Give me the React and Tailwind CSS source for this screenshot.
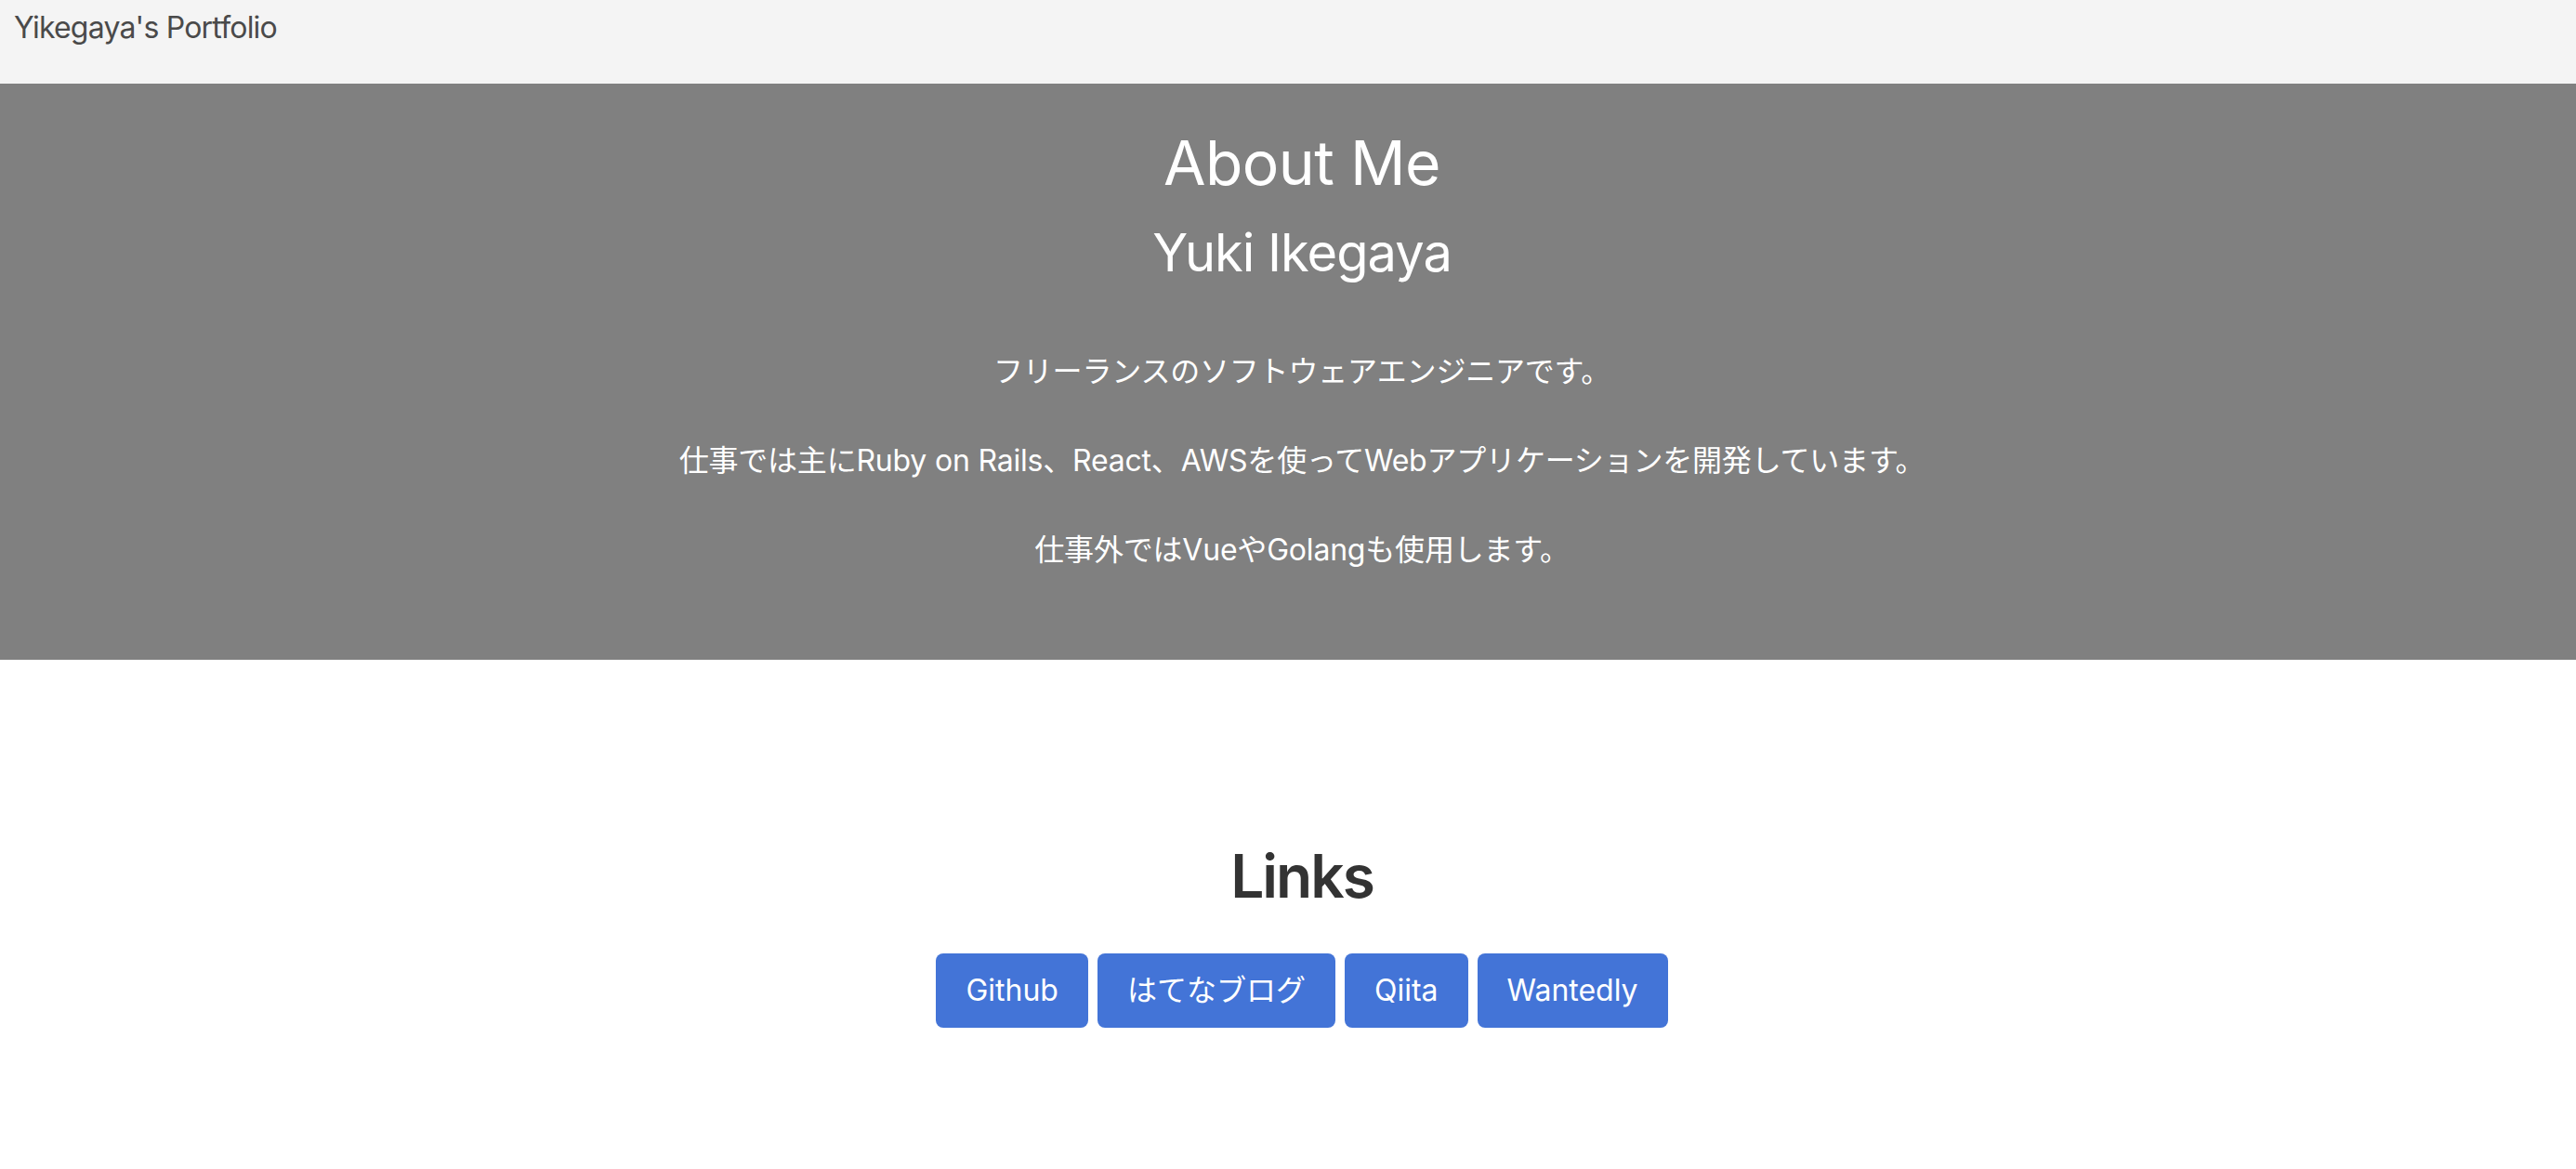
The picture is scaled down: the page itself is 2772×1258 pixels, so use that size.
import React from "react";

const links = [
  { id: 1, label: "Github" },
  { id: 2, label: "はてなブログ" },
  { id: 3, label: "Qiita" },
  { id: 4, label: "Wantedly" },
];

const font = { fontFamily: 'Inter, "Noto Sans CJK JP", sans-serif' };

export default function App() {
  return (
    <div className="min-h-screen bg-white" style={font}>
      {/* Header */}
      <header className="h-[90px] bg-[#f4f4f4] pl-[15px] pt-[6px]">
        <span className="text-[32px] leading-[48px] tracking-[-0.8px] text-[#4a4a4a]">Yikegaya's Portfolio</span>
      </header>

      {/* About */}
      <section className="bg-[#808080] pt-[46px] pb-[94px] pl-[30px] text-center text-white">
        <h2 className="text-[66px] leading-[1.2] font-normal tracking-[-0.6px] mb-[24px]">About Me</h2>
        <h3 className="text-[56px] leading-[1.2] font-normal tracking-[-1px] mb-[70px]">Yuki Ikegaya</h3>
        <div className="text-[32px] leading-[48px] tracking-[-0.2px] space-y-[48px]">
          <p>フリーランスのソフトウェアエンジニアです。</p>
          <p>仕事では主にRuby on Rails、React、AWSを使ってWebアプリケーションを開発しています。</p>
          <p>仕事外ではVueやGolangも使用します。</p>
        </div>
      </section>

      {/* Links */}
      <section className="pt-[195px] pl-[30px] pb-[152px] text-center">
        <h2 className="text-[64px] leading-[1.2] font-semibold tracking-[-2px] text-[#333] mb-[44px]">Links</h2>
        <div className="flex justify-center gap-[10px]">
          {links.map((link) => (
            <button
              key={link.id}
              className="bg-[#4374d7] text-white text-[32px] leading-[48px] px-[32px] py-[16px] rounded-[8px]"
            >
              {link.label}
            </button>
          ))}
        </div>
      </section>
    </div>
  );
}
